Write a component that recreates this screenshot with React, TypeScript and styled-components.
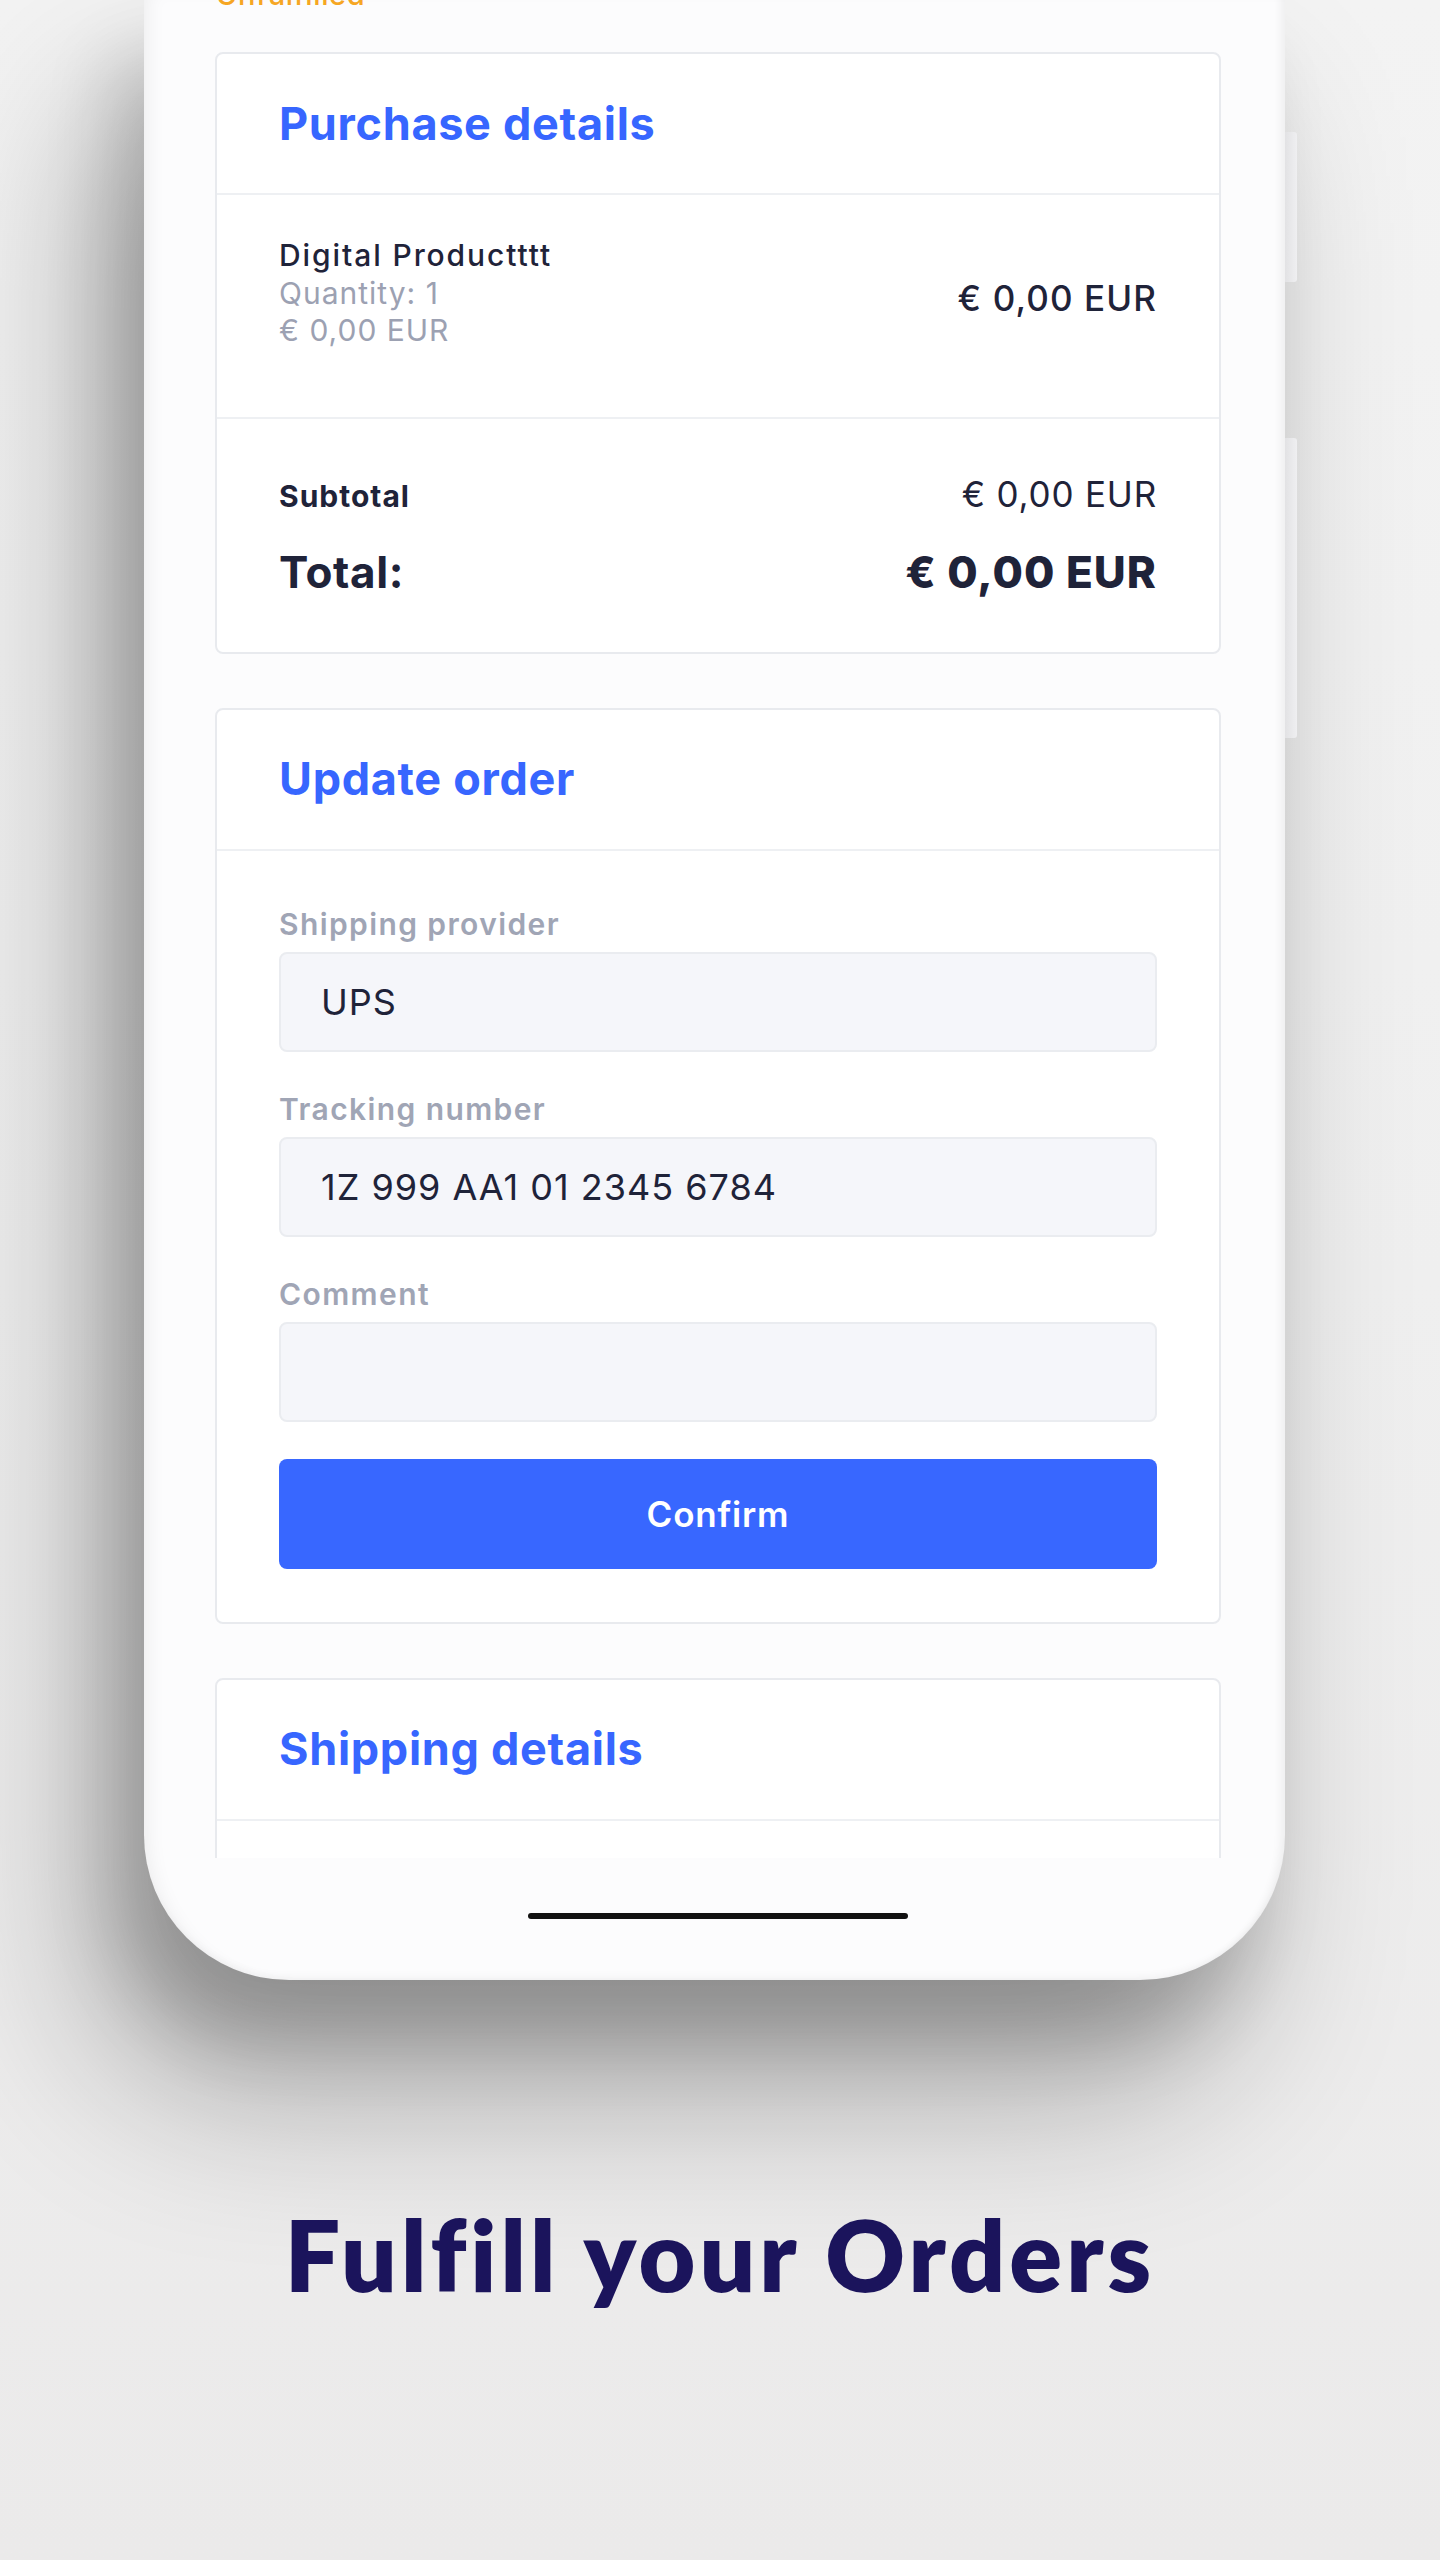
import styled, { createGlobalStyle } from "styled-components";

const GlobalStyle = createGlobalStyle`
  html, body {
    margin: 0;
    padding: 0;
  }
  body {
    font-family: Inter, "Liberation Sans", sans-serif;
    background: #eeeeee;
  }
`;

export default function App(): JSX.Element {
    return <Page>
        <GlobalStyle />
        <PhoneRow>
            <Phone>
                <Viewport>
                    <Content>
                        <Status>Unfulfilled</Status>

                        <Card>
                            <CardHeader><CardTitle>Purchase details</CardTitle></CardHeader>
                            <ItemRow>
                                <ItemInfo>
                                    <ItemName>Digital Productttt</ItemName>
                                    <ItemMeta>Quantity: 1</ItemMeta>
                                    <ItemMeta>€ 0,00 EUR</ItemMeta>
                                </ItemInfo>
                                <ItemPrice>€ 0,00 EUR</ItemPrice>
                            </ItemRow>
                            <Totals>
                                <SumRow>
                                    <SumLabel>Subtotal</SumLabel>
                                    <SumValue>€ 0,00 EUR</SumValue>
                                </SumRow>
                                <SumRow total>
                                    <SumLabel total>Total:</SumLabel>
                                    <SumValue total>€ 0,00 EUR</SumValue>
                                </SumRow>
                            </Totals>
                        </Card>

                        <Card>
                            <CardHeader><CardTitle>Update order</CardTitle></CardHeader>
                            <FormBody>
                                <Field>
                                    <Label>Shipping provider</Label>
                                    <Input readOnly value="UPS" />
                                </Field>
                                <Field>
                                    <Label>Tracking number</Label>
                                    <Input readOnly value="1Z 999 AA1 01 2345 6784" />
                                </Field>
                                <Field>
                                    <Label>Comment</Label>
                                    <Input readOnly value="" />
                                </Field>
                                <ConfirmButton>Confirm</ConfirmButton>
                            </FormBody>
                        </Card>

                        <Card>
                            <CardHeader><CardTitle>Shipping details</CardTitle></CardHeader>
                            <EmptyBody />
                        </Card>
                    </Content>
                </Viewport>
                <PhoneFooter>
                    <HomeBar />
                </PhoneFooter>
            </Phone>
            <ButtonRail>
                <SideButton size={150} />
                <SideButton size={300} />
            </ButtonRail>
        </PhoneRow>
        <Headline>Fulfill your Orders</Headline>
    </Page>;
}

const Page = styled.div`
    width: 1440px;
    height: 2560px;
    overflow: hidden;
    background: linear-gradient(180deg, #f3f3f3 0%, #efefef 50%, #ebeaea 100%);
`;

const PhoneRow = styled.div`
    display: flex;
    align-items: flex-start;
    padding-left: 144px;
`;

// the phone's top edge is above the picture, so only the bottom corners are round
const Phone = styled.div`
    width: 1141px;
    height: 1980px;
    display: flex;
    flex-direction: column;
    background: #fcfcfd;
    border-radius: 0 0 145px 145px;
    box-shadow:
        inset -12px 0 8px -8px rgba(0, 0, 0, 0.06),
        inset 16px 0 20px -14px rgba(0, 0, 0, 0.07),
        inset 0 -10px 10px -8px rgba(0, 0, 0, 0.05),
        -30px 60px 70px rgba(0, 0, 0, 0.16),
        -50px 110px 170px rgba(0, 0, 0, 0.3);
`;

const Viewport = styled.div`
    margin: 0 64px 0 71px;
    height: 1858px;
    overflow: hidden;
    flex-shrink: 0;
`;

const Content = styled.div`
    margin-top: -22px;
    display: flex;
    flex-direction: column;
`;

const Status = styled.div`
    font-size: 29px;
    line-height: 34px;
    font-weight: 500;
    letter-spacing: 0.6px;
    color: #f6a623;
    margin: 0 0 40px 1px;
`;

const Card = styled.section`
    background: #ffffff;
    border: 2px solid #e8eaee;
    border-radius: 8px;
    & + & {
        margin-top: 54px;
    }
`;

const CardHeader = styled.div`
    height: 139px;
    display: flex;
    align-items: center;
    padding: 0 62px;
    border-bottom: 2px solid #eef0f3;
`;

const CardTitle = styled.h2`
    margin: 0;
    font-size: 45px;
    line-height: 52px;
    font-weight: 700;
    letter-spacing: 0.7px;
    color: #3766ff;
`;

const ItemRow = styled.div`
    display: flex;
    justify-content: space-between;
    align-items: center;
    padding: 42px 62px 67px;
    border-bottom: 2px solid #eef0f3;
`;

const ItemInfo = styled.div`
    display: flex;
    flex-direction: column;
`;

const ItemName = styled.div`
    font-size: 30px;
    line-height: 37.5px;
    font-weight: 500;
    letter-spacing: 1.9px;
    color: #1f2339;
`;

const ItemMeta = styled.div`
    font-size: 30px;
    line-height: 37.5px;
    letter-spacing: 1px;
    color: #9ca1b2;
`;

const ItemPrice = styled.div`
    margin-top: 10px;
    font-size: 35px;
    line-height: 40px;
    font-weight: 500;
    letter-spacing: 1.1px;
    color: #1f2339;
`;

const Totals = styled.div`
    padding: 55px 62px 55px;
    display: flex;
    flex-direction: column;
    gap: 33px;
`;

const SumRow = styled.div<{ total?: boolean }>`
    display: flex;
    justify-content: space-between;
    align-items: baseline;
    height: ${p => (p.total ? "50px" : "40px")};
    line-height: ${p => (p.total ? "50px" : "40px")};
`;

const SumLabel = styled.span<{ total?: boolean }>`
    font-size: ${p => (p.total ? "44px" : "30px")};
    font-weight: 700;
    letter-spacing: ${p => (p.total ? "0.6px" : "1px")};
    color: #1f2339;
`;

const SumValue = styled.span<{ total?: boolean }>`
    font-size: ${p => (p.total ? "44px" : "35px")};
    font-weight: ${p => (p.total ? 800 : 400)};
    letter-spacing: ${p => (p.total ? "1px" : "0.8px")};
    color: #1f2339;
`;

const FormBody = styled.div`
    padding: 56px 62px 53px;
    display: flex;
    flex-direction: column;
`;

const Field = styled.div`
    display: flex;
    flex-direction: column;
    gap: 11px;
    & + & {
        margin-top: 40px;
    }
`;

const Label = styled.label`
    font-size: 30px;
    line-height: 34px;
    font-weight: 600;
    letter-spacing: 1.4px;
    color: #a0a5b5;
`;

const Input = styled.input`
    box-sizing: border-box;
    width: 100%;
    height: 100px;
    padding: 0 40px;
    border: 2px solid #eaecf0;
    border-radius: 8px;
    background: #f5f6fa;
    font: 400 36px Inter, "Liberation Sans", sans-serif;
    letter-spacing: 1px;
    color: #1f2339;
    outline: none;
`;

const ConfirmButton = styled.button`
    margin-top: 37px;
    height: 110px;
    width: 100%;
    border: none;
    border-radius: 8px;
    background: #3867ff;
    color: #ffffff;
    font: 600 35px Inter, "Liberation Sans", sans-serif;
    letter-spacing: 0.8px;
`;

const EmptyBody = styled.div`
    height: 240px;
`;

const PhoneFooter = styled.div`
    margin: 0 64px 0 71px;
    padding-top: 55px;
    display: flex;
    justify-content: center;
`;

const HomeBar = styled.div`
    width: 380px;
    height: 6px;
    border-radius: 3px;
    background: #111111;
`;

const ButtonRail = styled.div`
    display: flex;
    flex-direction: column;
    gap: 156px;
    padding-top: 132px;
`;

const SideButton = styled.div<{ size: number }>`
    width: 12px;
    height: ${p => p.size}px;
    border-radius: 0 3px 3px 0;
    background: linear-gradient(90deg, #e2e2e4, #efeff1);
`;

const Headline = styled.h1`
    margin: 216px 0 0;
    text-align: center;
    font-family: Lato, "Liberation Sans", sans-serif;
    font-size: 98px;
    line-height: 1.2;
    font-weight: 800;
    letter-spacing: 4px;
    font-variant-ligatures: none;
    color: #1b145c;
`;
